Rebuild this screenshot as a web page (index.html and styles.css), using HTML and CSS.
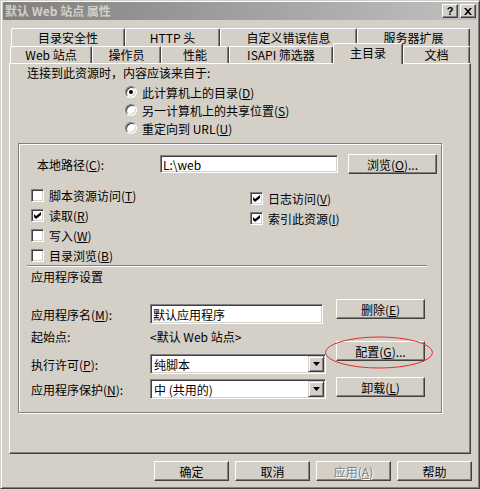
FILE: index.html
```html
<!DOCTYPE html>
<html lang="zh-CN">
<head>
<meta charset="utf-8">
<title>默认 Web 站点 属性</title>
<link rel="stylesheet" href="styles.css">
</head>
<body>
<div class="window">
  <div class="titlebar">
    <span class="title">默认 Web 站点 属性</span>
    <div class="tbtns">
      <span class="tbtn help">?</span>
      <span class="tbtn"><svg width="8" height="7" viewBox="0 0 8 7"><path d="M0 0h2l2 2.3 2-2.3h2l-3 3.5 3 3.5h-2l-2-2.3-2 2.3h-2l3-3.5z" fill="#000"/></svg></span>
    </div>
  </div>
  <div class="main">
    <div class="tabrow back">
      <div class="tab w-dirsec">目录安全性</div>
      <div class="tab w-http">HTTP 头</div>
      <div class="tab w-err">自定义错误信息</div>
      <div class="tab w-ext">服务器扩展</div>
    </div>
    <div class="tabrow front">
      <div class="tab w-site">Web 站点</div>
      <div class="tab w-op">操作员</div>
      <div class="tab w-perf">性能</div>
      <div class="tab w-isapi">ISAPI 筛选器</div>
      <div class="tab sel w-home">主目录</div>
      <div class="tab w-doc">文档</div>
    </div>
    <div class="panel">
      <div class="intro">连接到此资源时，内容应该来自于:</div>
      <div class="radios">
        <div class="radio-row"><span class="radio on"></span><span>此计算机上的目录(<u>D</u>)</span></div>
        <div class="radio-row"><span class="radio"></span><span>另一计算机上的共享位置(<u>S</u>)</span></div>
        <div class="radio-row"><span class="radio"></span><span>重定向到 URL(<u>U</u>)</span></div>
      </div>
      <div class="group">
        <div class="pathrow">
          <span class="pathlabel">本地路径(<u>C</u>):</span>
          <span class="field pathfield">L:\web</span>
          <span class="btn browse">浏览(<u>O</u>)...</span>
        </div>
        <div class="checks">
          <div class="ccol left">
            <div class="cbrow"><span class="cb"></span><span>脚本资源访问(<u>T</u>)</span></div>
            <div class="cbrow"><span class="cb"><svg width="7" height="7" viewBox="0 0 7 7"><path d="M0 2l2 2 5-4v3l-5 4-2-2z" fill="#000"/></svg></span><span>读取(<u>R</u>)</span></div>
            <div class="cbrow"><span class="cb"></span><span>写入(<u>W</u>)</span></div>
            <div class="cbrow"><span class="cb"></span><span>目录浏览(<u>B</u>)</span></div>
          </div>
          <div class="ccol right">
            <div class="cbrow"><span class="cb"><svg width="7" height="7" viewBox="0 0 7 7"><path d="M0 2l2 2 5-4v3l-5 4-2-2z" fill="#000"/></svg></span><span>日志访问(<u>V</u>)</span></div>
            <div class="cbrow"><span class="cb"><svg width="7" height="7" viewBox="0 0 7 7"><path d="M0 2l2 2 5-4v3l-5 4-2-2z" fill="#000"/></svg></span><span>索引此资源(<u>I</u>)</span></div>
          </div>
        </div>
        <div class="sep"></div>
        <div class="appheading">应用程序设置</div>
        <div class="app">
          <div class="appleft">
            <div class="arow r1"><span class="alabel">应用程序名(<u>M</u>):</span><span class="field appname">默认应用程序</span></div>
            <div class="arow r2"><span class="alabel">起始点:</span><span>&lt;默认 Web 站点&gt;</span></div>
            <div class="arow r3"><span class="alabel">执行许可(<u>P</u>):</span>
              <span class="field select"><span class="seltext">纯脚本</span><span class="arrowbtn"><svg width="7" height="4" viewBox="0 0 7 4"><path d="M0 0h7L3.5 4z" fill="#000"/></svg></span></span>
            </div>
            <div class="arow r4"><span class="alabel">应用程序保护(<u>N</u>):</span>
              <span class="field select"><span class="seltext">中 (共用的)</span><span class="arrowbtn"><svg width="7" height="4" viewBox="0 0 7 4"><path d="M0 0h7L3.5 4z" fill="#000"/></svg></span></span>
            </div>
          </div>
          <div class="appright">
            <span class="btn abtn b1">删除(<u>E</u>)</span>
            <span class="btn abtn b2">配置(<u>G</u>)...</span>
            <span class="btn abtn b3">卸载(<u>L</u>)</span>
          </div>
        </div>
      </div>
    </div>
    <div class="footer">
      <span class="btn fbtn">确定</span>
      <span class="btn fbtn">取消</span>
      <span class="btn fbtn disabled">应用(<u>A</u>)</span>
      <span class="btn fbtn">帮助</span>
    </div>
  </div>
  <div class="annot"><svg width="110" height="33" viewBox="0 0 110 33"><ellipse cx="55" cy="16.5" rx="53.5" ry="15.5" fill="none" stroke="#e8292c" stroke-width="1"/></svg></div>
</div>
</body>
</html>
```

FILE: styles.css
```css
* { box-sizing: border-box; }
html, body { margin: 0; padding: 0; }
body {
  width: 480px;
  height: 489px;
  overflow: hidden;
  background: #d4d0c8;
  font-family: "Noto Sans CJK SC", "Noto Sans", sans-serif;
  font-size: 12px;
  color: #000;
}
u { text-decoration: underline; text-underline-offset: 1px; }

.window {
  position: relative;
  width: 480px;
  height: 489px;
  background: #d4d0c8;
  border: 1px solid;
  border-color: #d4d0c8 #404040 #404040 #d4d0c8;
  box-shadow: inset 1px 1px 0 #fff, inset -1px -1px 0 #808080;
  padding: 1px 2px 0 2px;
}

.titlebar {
  height: 18px;
  display: flex;
  align-items: center;
  justify-content: space-between;
  background: linear-gradient(to right, #808080, #c0c0c0);
  padding: 0 1px 0 2px;
}
.title {
  color: #d4d0c8;
  font-weight: bold;
  font-size: 12px;
  line-height: 18px;
  white-space: nowrap;
}
.tbtns { display: flex; gap: 2px; }
.tbtn {
  width: 16px;
  height: 14px;
  background: #d4d0c8;
  border: 1px solid;
  border-color: #fff #404040 #404040 #fff;
  box-shadow: inset -1px -1px 0 #808080;
  display: flex;
  align-items: center;
  justify-content: center;
}
.tbtn.help {
  font-family: "Liberation Sans", sans-serif;
  font-weight: bold;
  font-size: 11px;
  line-height: 1;
}

.main { padding: 0 6px; }

.tabrow { display: flex; }
.tabrow.back { height: 18px; margin-top: 8px; padding-left: 2px; }
.tabrow.front { height: 17px; padding-left: 1px; }
.tab {
  background: #d4d0c8;
  border-top: 1px solid #fff;
  border-left: 1px solid #fff;
  border-right: 1px solid #404040;
  box-shadow: inset -1px 0 0 #808080;
  border-radius: 2px 2px 0 0;
  display: flex;
  align-items: center;
  justify-content: center;
  white-space: nowrap;
  line-height: 16px;
  flex: none;
}
.tab.sel {
  position: relative;
  z-index: 2;
  height: 21px;
  margin-top: -3px;
  align-self: flex-start;
  padding-bottom: 3px;
}
.w-dirsec { width: 114px; }
.w-http { width: 95px; }
.w-err { width: 137px; }
.w-ext { width: 113px; }
.w-site { width: 82px; }
.w-op { width: 69px; }
.w-perf { width: 68px; }
.w-isapi { width: 104px; }
.w-home { width: 70px; }
.w-doc { width: 67px; }

.panel {
  height: 391px;
  border-top: 1px solid #fff;
  border-left: 1px solid #fff;
  border-right: 1px solid #404040;
  border-bottom: 1px solid #404040;
  box-shadow: inset -1px -1px 0 #808080;
  padding-top: 1px;
}
.intro { height: 16px; line-height: 16px; margin-left: 17px; }
.radios { margin: 2px 0 0 115px; }
.radio-row { display: flex; align-items: center; height: 18px; gap: 5px; white-space: nowrap; }
.radio {
  position: relative;
  flex: none;
  width: 12px;
  height: 12px;
  border-radius: 50%;
  background: #fff;
  border: 1px solid;
  border-color: #808080 #fff #fff #808080;
  box-shadow: inset 1px 1px 0 #404040, inset -1px -1px 0 #d4d0c8;
}
.radio.on::after {
  content: "";
  position: absolute;
  left: 3px;
  top: 3px;
  width: 4px;
  height: 4px;
  border-radius: 50%;
  background: #000;
}

.group {
  width: 424px;
  height: 270px;
  margin: 6px 0 0 8px;
  border: 1px solid #808080;
  box-shadow: 1px 1px 0 #fff, inset 1px 1px 0 #fff;
}
.field {
  background: #fff;
  border: 1px solid;
  border-color: #808080 #fff #fff #808080;
  box-shadow: inset 1px 1px 0 #404040, inset -1px -1px 0 #d4d0c8;
  padding-left: 2px;
  display: flex;
  align-items: center;
  white-space: nowrap;
}
.btn {
  background: #d4d0c8;
  border: 1px solid;
  border-color: #fff #404040 #404040 #fff;
  box-shadow: inset -1px -1px 0 #808080;
  display: flex;
  align-items: center;
  justify-content: center;
  white-space: nowrap;
  height: 20px;
  flex: none;
}
.pathrow { display: flex; align-items: center; height: 20px; margin-top: 10px; padding-left: 18px; }
.pathlabel { width: 123px; flex: none; }
.pathfield { width: 178px; height: 18px; flex: none; }
.browse { width: 89px; margin-left: 10px; }

.checks { display: flex; margin-top: 11px; height: 80px; }
.ccol.left { width: 231px; padding-left: 12px; flex: none; }
.ccol.right { margin-top: 3px; }
.cbrow { display: flex; align-items: center; height: 20px; gap: 5px; white-space: nowrap; }
.cb {
  flex: none;
  width: 13px;
  height: 13px;
  background: #fff;
  border: 1px solid;
  border-color: #808080 #fff #fff #808080;
  box-shadow: inset 1px 1px 0 #404040, inset -1px -1px 0 #d4d0c8;
  display: flex;
  align-items: center;
  justify-content: center;
}

.sep {
  margin-left: 8px;
  width: 400px;
  height: 2px;
  border-top: 1px solid #808080;
  border-bottom: 1px solid #fff;
}
.appheading { height: 16px; line-height: 16px; margin: 2px 0 0 12px; }

.app { display: flex; padding-left: 12px; }
.appleft { width: 305px; flex: none; }
.arow { display: flex; align-items: center; height: 20px; white-space: nowrap; }
.arow.r1 { margin-top: 19px; }
.arow.r2 { margin-top: 2px; }
.arow.r3 { margin-top: 8px; }
.arow.r4 { margin-top: 5px; }
.alabel { width: 119px; flex: none; }
.appname { width: 173px; height: 20px; }
.select { width: 176px; height: 20px; padding: 1px; }
.seltext { flex: 1; padding-left: 2px; }
.arrowbtn {
  width: 16px;
  height: 16px;
  background: #d4d0c8;
  border: 1px solid;
  border-color: #d4d0c8 #404040 #404040 #d4d0c8;
  box-shadow: inset 1px 1px 0 #fff, inset -1px -1px 0 #808080;
  display: flex;
  align-items: center;
  justify-content: center;
}
.appright { display: flex; flex-direction: column; }
.abtn { width: 89px; }
.abtn.b1 { margin-top: 14px; }
.abtn.b2 { margin-top: 22px; }
.abtn.b3 { margin-top: 16px; }

.footer {
  display: flex;
  justify-content: flex-end;
  gap: 6px;
  margin: 7px -1px 0 0;
}
.fbtn { width: 75px; }
.btn.disabled { color: #808080; text-shadow: 1px 1px 0 #fff; }

.annot {
  position: absolute;
  left: 323px;
  top: 335px;
  width: 110px;
  height: 33px;
  pointer-events: none;
}
.annot svg { display: block; }
```
